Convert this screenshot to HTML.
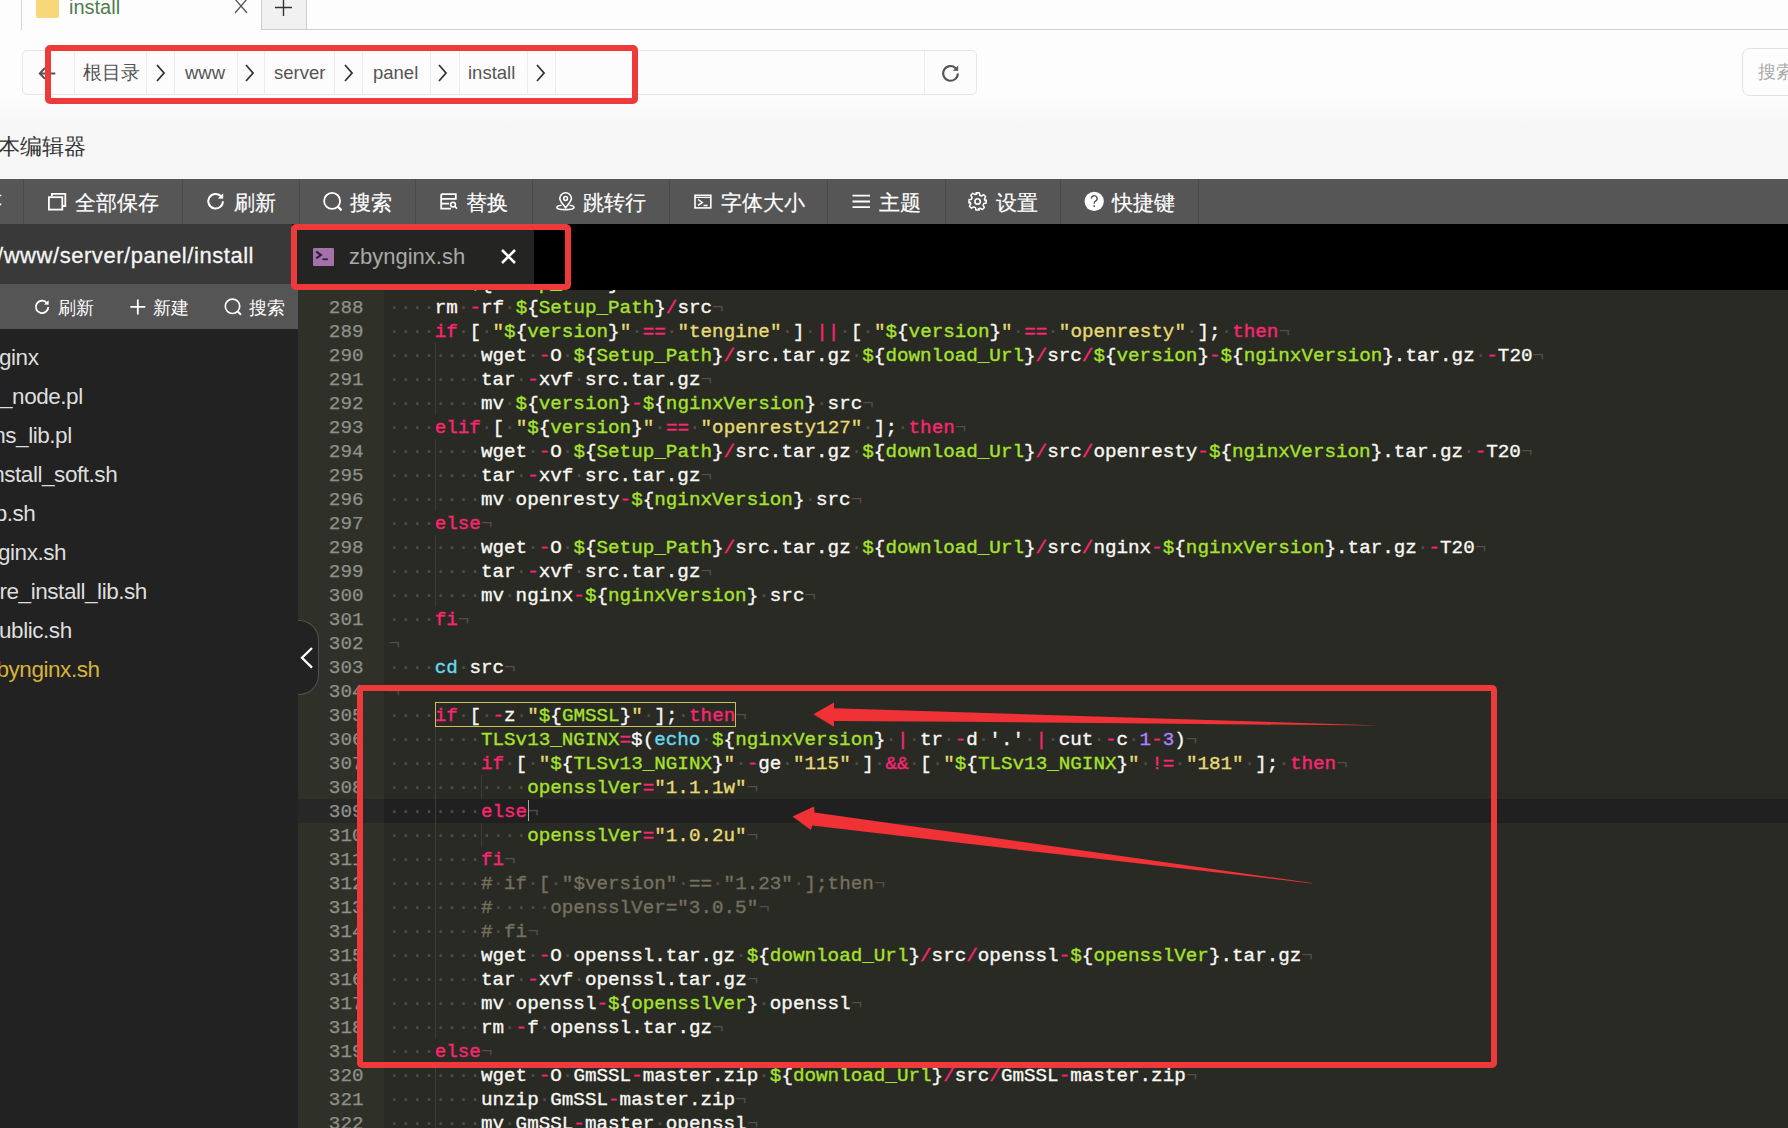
<!DOCTYPE html>
<html><head><meta charset="utf-8">
<style>
*{margin:0;padding:0;box-sizing:border-box}
html,body{width:1788px;height:1128px;overflow:hidden}
body{position:relative;background:#fdfdfd;font-family:"Liberation Sans",sans-serif;}
.a{position:absolute;white-space:nowrap}
/* top light area */
#top{left:0;top:0;width:1788px;height:179px;background:linear-gradient(#fdfdfd 0,#fdfdfd 95px,#f7f7f7 125px,#f6f6f6 179px)}
#tabline{left:306px;top:29px;width:1482px;height:1px;background:#cfcfcf}
#tabl{left:21px;top:0;width:1px;height:30px;background:#d6d6d6}
#plus{left:261px;top:0;width:46px;height:30px;background:#f1f1f1;border:1px solid #cdcdcd;border-top:0}
#folder{left:36px;top:-2px;width:23px;height:20px;background:#f6d77a;border-radius:2px}
#tabtxt{left:69px;top:-8px;font-size:20px;color:#4d7d4d;line-height:30px}
#bc{left:22px;top:50px;width:955px;height:45px;border:1px solid #e6e6e6;border-radius:5px;background:#fcfcfc}
.bsep{top:51px;width:1px;height:43px;background:#ececec}
.btxt{top:50px;height:45px;line-height:45px;font-size:18.5px;color:#555}
.chev{top:63px}
#srch{left:1742px;top:48px;width:60px;height:47.5px;border:1px solid #e3e3e3;border-radius:8px;background:#fdfdfd}
#srchtxt{left:1758px;top:50px;line-height:45px;font-size:18px;color:#aaa;white-space:nowrap}
#title{left:-2px;top:132px;font-size:22px;color:#333;line-height:30px}
/* toolbar */
#tb{left:0;top:179px;width:1788px;height:45px;background:#565656}
.tsep{top:179px;width:1px;height:45px;background:#4a4a4a}
.ttxt{top:180px;line-height:45px;font-size:21px;color:#fff;-webkit-text-stroke:0.2px #fff}
/* dark strip */
#strip{left:0;top:224px;width:1788px;height:66px;background:#000}
#pathbar{left:0;top:224px;width:292px;height:60px;background:#393939}
#pathtxt{left:-3px;top:226px;line-height:60px;font-size:22px;color:#f5f5f5;letter-spacing:0.55px;-webkit-text-stroke:0.3px #f5f5f5}
#tab{left:297px;top:230px;width:237px;height:54px;background:#242522}
#tabname{left:349px;top:230px;line-height:54px;font-size:22px;color:#a9a9a9}
/* sidebar */
#sbt{left:0;top:284px;width:298px;height:45px;background:#555}
.stxt{top:285.5px;line-height:45px;font-size:18px;color:#fff}
#sbl{left:0;top:329px;width:298px;height:799px;background:#222}
.file{left:0;font-size:22.5px;color:#dedede;line-height:39px;letter-spacing:-0.45px}
/* editor */
#ed{left:298px;top:290px;width:1490px;height:838px;background:#2a2a25;overflow:hidden}
#gut{left:0;top:0;width:86px;height:838px;background:#2f3129}
.gn{position:absolute;left:0;width:65.5px;-webkit-text-stroke:0.25px currentColor;text-align:right;height:24px;line-height:24px;color:#8f908a}
#code{left:86px;top:0;width:1404px;height:838px}
.row{position:absolute;left:4.5px;height:24px;line-height:24px;white-space:pre;color:#f8f8f2}
.mono{font-family:"Liberation Mono",monospace;font-size:19.25px}
.row b{font-weight:normal}
.row{-webkit-text-stroke:0.35px currentColor}
.row i{font-style:normal;color:#505049;-webkit-text-stroke:0}
.k{color:#f92672}.s{color:#e6db74}.v{color:#a6e22e}.t{color:#f8f8f2}.b{color:#66d9ef}.n{color:#ae81ff}.c{color:#75715e}
.ig{position:absolute;width:1px;background:#3d3d36}
#act{left:0;top:508.5px;width:1490px;height:24px;background:#202020}
#gact{left:0;top:508.5px;width:86px;height:24px;background:#272727}
/* annotations */
.rbox{border:6.5px solid #ee3a3b;border-radius:5px}
</style></head><body>
<div class="a" id="top"></div>
<div class="a" id="tabl"></div>
<div class="a" id="folder"></div>
<div class="a" id="tabtxt">install</div>
<svg class="a" style="left:234px;top:0" width="14" height="14"><path d="M1 -1 L13 13 M13 -1 L1 13" stroke="#555" stroke-width="1.3" fill="none"/></svg>
<div class="a" id="plus"></div>
<svg class="a" style="left:274px;top:0" width="19" height="17"><path d="M1 7.5 H18 M9.5 0 V16" stroke="#333" stroke-width="1.4" fill="none"/></svg>
<div class="a" id="tabline"></div>

<div class="a" id="bc"></div>
<svg class="a" style="left:30px;top:60px" width="30" height="26"><path d="M10 13.4 H25.3 M15 8 L9.8 13.4 L15 18.9" stroke="#555" stroke-width="2" fill="none"/></svg>
<div class="a bsep" style="left:74px"></div>
<div class="a btxt" style="left:83px">根目录</div>
<div class="a bsep" style="left:146px"></div>
<svg class="a chev" style="left:154px" width="14" height="20"><path d="M3 2 L10 10 L3 18" stroke="#333" stroke-width="1.8" fill="none"/></svg>
<div class="a bsep" style="left:174px"></div>
<div class="a btxt" style="left:185px">www</div>
<div class="a bsep" style="left:237px"></div>
<svg class="a chev" style="left:243px" width="14" height="20"><path d="M3 2 L10 10 L3 18" stroke="#333" stroke-width="1.8" fill="none"/></svg>
<div class="a bsep" style="left:264px"></div>
<div class="a btxt" style="left:274px">server</div>
<div class="a bsep" style="left:334px"></div>
<svg class="a chev" style="left:342px" width="14" height="20"><path d="M3 2 L10 10 L3 18" stroke="#333" stroke-width="1.8" fill="none"/></svg>
<div class="a bsep" style="left:362px"></div>
<div class="a btxt" style="left:373px">panel</div>
<div class="a bsep" style="left:430px"></div>
<svg class="a chev" style="left:436px" width="14" height="20"><path d="M3 2 L10 10 L3 18" stroke="#333" stroke-width="1.8" fill="none"/></svg>
<div class="a bsep" style="left:459px"></div>
<div class="a btxt" style="left:468px">install</div>
<div class="a bsep" style="left:527px"></div>
<svg class="a chev" style="left:534px" width="14" height="20"><path d="M3 2 L10 10 L3 18" stroke="#333" stroke-width="1.8" fill="none"/></svg>
<div class="a bsep" style="left:555px"></div>
<div class="a bsep" style="left:924px"></div>
<svg class="a" style="left:0;top:0" width="1000" height="100"><path d="M957.85 73.40 A7.35 7.35 0 1 1 955.70 68.20" stroke="#555" stroke-width="2.10" fill="none"/><path d="M958.19 65.40 L958.19 70.87 L952.83 70.67 Z" fill="#555" stroke="none"/></svg>
<div class="a rbox" style="left:45px;top:45px;width:593px;height:59px"></div>
<div class="a" id="srch"></div>
<div class="a" id="srchtxt">搜索</div>
<div class="a" id="title">本编辑器</div>

<div class="a" id="tb"></div>
<div class="a tsep" style="left:23px"></div>
<div class="a tsep" style="left:182px"></div>
<div class="a tsep" style="left:299px"></div>
<div class="a tsep" style="left:415px"></div>
<div class="a tsep" style="left:532px"></div>
<div class="a tsep" style="left:669px"></div>
<div class="a tsep" style="left:827px"></div>
<div class="a tsep" style="left:945px"></div>
<div class="a tsep" style="left:1060px"></div>
<div class="a tsep" style="left:1198px"></div>
<div class="a ttxt" style="left:75px">全部保存</div>
<div class="a ttxt" style="left:234px">刷新</div>
<div class="a ttxt" style="left:350px">搜索</div>
<div class="a ttxt" style="left:466px">替换</div>
<div class="a ttxt" style="left:583px">跳转行</div>
<div class="a ttxt" style="left:721px">字体大小</div>
<div class="a ttxt" style="left:879px">主题</div>
<div class="a ttxt" style="left:996px">设置</div>
<div class="a ttxt" style="left:1112px">快捷键</div>


<svg class="a" style="left:0;top:179px" width="1200" height="45" viewBox="0 179 1200 45" fill="none" stroke="#fff" stroke-width="1.8">
<path d="M0 195.5 H1.3 M0 204.4 H1.3" stroke-width="1.6"/>
<!-- save all -->
<rect x="48.9" y="197.2" width="13.4" height="12.4"/>
<path d="M51.9 196.2 V193.9 H65.3 V206 H63"/>
<!-- refresh -->
<path d="M222.90 201.20 A7.30 7.30 0 1 1 220.76 196.04" stroke="#fff" stroke-width="2.00" fill="none"/><path d="M223.20 193.30 L223.20 198.70 L217.90 198.50 Z" fill="#fff" stroke="none"/>
<!-- search -->
<circle cx="332.1" cy="200.9" r="8"/>
<path d="M337.8 206.6 L341.6 210.4" stroke-width="2.2"/>
<!-- replace -->
<path d="M441.2 194.2 V208.6 H451 M441.2 194.2 H455.8 V198.9 H441.2 M441.2 203.7 H449"/>
<circle cx="453" cy="204.6" r="2.4" stroke-width="1.6"/>
<path d="M454.8 206.4 L457 208.6" stroke-width="1.6"/>
<!-- pin -->
<g transform="translate(0 0.8)">
<path d="M565.6 207 C561 201.5 559.8 199.5 559.8 197.8 A5.8 5.8 0 0 1 571.4 197.8 C571.4 199.5 570.2 201.5 565.6 207 Z" stroke-width="1.6"/>
<circle cx="565.6" cy="197.7" r="1.9" stroke-width="1.5"/>
</g>
<path d="M561.5 205.3 C557.5 205.8 556.8 206.6 556.8 207.4 C556.8 208.7 560.8 209.6 565.4 209.6 C570 209.6 574 208.7 574 207.4 C574 206.6 573.2 205.8 569.5 205.3" stroke-width="1.6"/>
<!-- terminal window -->
<rect x="695" y="195.3" width="15.8" height="12.6" stroke-width="1.6"/>
<path d="M695 197.4 H710.8" stroke-width="1.2"/>
<path d="M698 199.5 L702.4 202.5 L698 205.4 M703.5 205.4 H707.6" stroke-width="1.5"/>
<!-- menu -->
<path d="M852.5 195.6 H870 M852.5 201.5 H870 M852.5 207.2 H870" stroke-width="1.8"/>
<!-- gear -->
<g transform="translate(977.6 201.4)">
<path d="M-1.6 -8.6 L1.6 -8.6 L2.2 -6.1 L3.9 -5.4 L6.1 -6.7 L8.1 -4.7 L6.8 -2.5 L7.4 -0.8 L8.6 -1.4 L8.6 1.6 L6.2 2.2 L5.5 3.9 L6.8 6.1 L4.8 8.1 L2.5 6.8 L0.9 7.4 L1.6 8.6 L-1.6 8.6 L-2.2 6.2 L-3.9 5.5 L-6.1 6.8 L-8.1 4.8 L-6.8 2.5 L-7.4 0.9 L-8.6 1.6 L-8.6 -1.6 L-6.2 -2.2 L-5.5 -3.9 L-6.8 -6.1 L-4.8 -8.1 L-2.5 -6.8 L-0.9 -7.4 Z" stroke-width="1.5" stroke-linejoin="round"/>
<circle cx="0" cy="0" r="2.7" stroke-width="1.6"/>
</g>
<!-- help -->
<circle cx="1094.2" cy="201.4" r="9.6" fill="#fff" stroke="none"/>
<path d="M1091.3 198.6 A2.9 2.9 0 1 1 1095.4 201.2 C1094.4 201.8 1094.2 202.4 1094.2 203.8" stroke="#555" stroke-width="1.4"/>
<circle cx="1094.2" cy="206" r="0.9" fill="#555" stroke="none"/>
</svg>


<div class="a" id="strip"></div>
<div class="a" id="pathbar"></div>
<div class="a" id="pathtxt">/www/server/panel/install</div>
<div class="a" id="tab"></div>
<div class="a" style="left:313px;top:248px;width:21px;height:18px;background:#a571aa;border-radius:1px"></div>
<div class="a" id="tabname">zbynginx.sh</div>
<svg class="a" style="left:313px;top:248px" width="21" height="18" fill="none"><path d="M3.2 3.6 L8 7 L3.2 10.4" stroke="#2a1d3a" stroke-width="2"/><path d="M9.5 11.3 H14.8" stroke="#2a1d3a" stroke-width="1.8"/></svg>
<svg class="a" style="left:500px;top:248px" width="17" height="17" fill="none"><path d="M2 2 L15 15 M15 2 L2 15" stroke="#fff" stroke-width="2.6"/></svg>

<div class="a" id="sbt"></div>
<svg class="a" style="left:0;top:284px" width="298" height="45" viewBox="0 284 298 45" fill="none" stroke="#fff" stroke-width="1.7">
<path d="M48.30 306.90 A6.20 6.20 0 1 1 46.48 302.52" stroke="#fff" stroke-width="1.80" fill="none"/><path d="M48.60 300.14 L48.60 304.76 L44.07 304.59 Z" fill="#fff" stroke="none"/>
<path d="M130.3 306.9 H145.3 M137.8 299.4 V314.5" stroke-width="1.8"/>
<circle cx="232.5" cy="306.3" r="7.2"/>
<path d="M237.7 311.5 L241 314.8" stroke-width="2"/>
</svg>
<div class="a stxt" style="left:58px">刷新</div>
<div class="a stxt" style="left:153px">新建</div>
<div class="a stxt" style="left:249px">搜索</div>
<div class="a" id="sbl"></div>
<div class="a file" style="top:338px;left:-1px">ginx</div>
<div class="a file" style="top:377px;left:0px">_node.pl</div>
<div class="a file" style="top:416px;left:-6.8px">ns_lib.pl</div>
<div class="a file" style="top:455px;left:-7.8px">nstall_soft.sh</div>
<div class="a file" style="top:494px;left:-5.3px">p.sh</div>
<div class="a file" style="top:533px;left:-2px">ginx.sh</div>
<div class="a file" style="top:572px;left:-0.5px">re_install_lib.sh</div>
<div class="a file" style="top:611px;left:-1px">ublic.sh</div>
<div class="a file" style="top:650px;left:-3.5px;color:#d7b23a">bynginx.sh</div>

<div class="a mono" id="ed">
<div class="a" id="act"></div>
<div class="a" id="gut">
<div class="a" id="gact"></div>
<div class="gn" style="top:-18.5px">287</div>
<div class="gn" style="top:5.5px">288</div>
<div class="gn" style="top:29.5px">289</div>
<div class="gn" style="top:53.5px">290</div>
<div class="gn" style="top:77.5px">291</div>
<div class="gn" style="top:101.5px">292</div>
<div class="gn" style="top:125.5px">293</div>
<div class="gn" style="top:149.5px">294</div>
<div class="gn" style="top:173.5px">295</div>
<div class="gn" style="top:197.5px">296</div>
<div class="gn" style="top:221.5px">297</div>
<div class="gn" style="top:245.5px">298</div>
<div class="gn" style="top:269.5px">299</div>
<div class="gn" style="top:293.5px">300</div>
<div class="gn" style="top:317.5px">301</div>
<div class="gn" style="top:341.5px">302</div>
<div class="gn" style="top:365.5px">303</div>
<div class="gn" style="top:389.5px">304</div>
<div class="gn" style="top:413.5px">305</div>
<div class="gn" style="top:437.5px">306</div>
<div class="gn" style="top:461.5px">307</div>
<div class="gn" style="top:485.5px">308</div>
<div class="gn" style="top:509.5px">309</div>
<div class="gn" style="top:533.5px">310</div>
<div class="gn" style="top:557.5px">311</div>
<div class="gn" style="top:581.5px">312</div>
<div class="gn" style="top:605.5px">313</div>
<div class="gn" style="top:629.5px">314</div>
<div class="gn" style="top:653.5px">315</div>
<div class="gn" style="top:677.5px">316</div>
<div class="gn" style="top:701.5px">317</div>
<div class="gn" style="top:725.5px">318</div>
<div class="gn" style="top:749.5px">319</div>
<div class="gn" style="top:773.5px">320</div>
<div class="gn" style="top:797.5px">321</div>
<div class="gn" style="top:821.5px">322</div>
</div>
<div class="a" id="code">
<div class="ig" style="left:50.7px;top:52.5px;height:72px"></div>
<div class="ig" style="left:50.7px;top:148.5px;height:72px"></div>
<div class="ig" style="left:50.7px;top:244.5px;height:72px"></div>
<div class="ig" style="left:50.7px;top:436.5px;height:312px"></div>
<div class="ig" style="left:50.7px;top:772.5px;height:72px"></div>
<div class="ig" style="left:96.9px;top:484.5px;height:24px"></div>
<div class="ig" style="left:96.9px;top:532.5px;height:24px"></div>
<div class="row" style="top:-18.5px"><i>····</i><b class="b">cd</b><i>·</i><b class="v">$</b><b class="t">{</b><b class="v">Setup_Path</b><b class="t">}</b><i>¬</i></div>
<div class="row" style="top:5.5px"><i>····</i><b class="t">rm</b><i>·</i><b class="k">-</b><b class="t">rf</b><i>·</i><b class="v">$</b><b class="t">{</b><b class="v">Setup_Path</b><b class="t">}</b><b class="k">/</b><b class="t">src</b><i>¬</i></div>
<div class="row" style="top:29.5px"><i>····</i><b class="k">if</b><i>·</i><b class="t">[</b><i>·</i><b class="s">"</b><b class="v">$</b><b class="t">{</b><b class="v">version</b><b class="t">}</b><b class="s">"</b><i>·</i><b class="k">==</b><i>·</i><b class="s">"</b><b class="s">tengine</b><b class="s">"</b><i>·</i><b class="t">]</b><i>·</i><b class="k">||</b><i>·</i><b class="t">[</b><i>·</i><b class="s">"</b><b class="v">$</b><b class="t">{</b><b class="v">version</b><b class="t">}</b><b class="s">"</b><i>·</i><b class="k">==</b><i>·</i><b class="s">"</b><b class="s">openresty</b><b class="s">"</b><i>·</i><b class="t">]</b><b class="t">;</b><i>·</i><b class="k">then</b><i>¬</i></div>
<div class="row" style="top:53.5px"><i>········</i><b class="t">wget</b><i>·</i><b class="k">-</b><b class="t">O</b><i>·</i><b class="v">$</b><b class="t">{</b><b class="v">Setup_Path</b><b class="t">}</b><b class="k">/</b><b class="t">src</b><b class="t">.</b><b class="t">tar</b><b class="t">.</b><b class="t">gz</b><i>·</i><b class="v">$</b><b class="t">{</b><b class="v">download_Url</b><b class="t">}</b><b class="k">/</b><b class="t">src</b><b class="k">/</b><b class="v">$</b><b class="t">{</b><b class="v">version</b><b class="t">}</b><b class="k">-</b><b class="v">$</b><b class="t">{</b><b class="v">nginxVersion</b><b class="t">}</b><b class="t">.</b><b class="t">tar</b><b class="t">.</b><b class="t">gz</b><i>·</i><b class="k">-</b><b class="t">T20</b><i>¬</i></div>
<div class="row" style="top:77.5px"><i>········</i><b class="t">tar</b><i>·</i><b class="k">-</b><b class="t">xvf</b><i>·</i><b class="t">src</b><b class="t">.</b><b class="t">tar</b><b class="t">.</b><b class="t">gz</b><i>¬</i></div>
<div class="row" style="top:101.5px"><i>········</i><b class="t">mv</b><i>·</i><b class="v">$</b><b class="t">{</b><b class="v">version</b><b class="t">}</b><b class="k">-</b><b class="v">$</b><b class="t">{</b><b class="v">nginxVersion</b><b class="t">}</b><i>·</i><b class="t">src</b><i>¬</i></div>
<div class="row" style="top:125.5px"><i>····</i><b class="k">elif</b><i>·</i><b class="t">[</b><i>·</i><b class="s">"</b><b class="v">$</b><b class="t">{</b><b class="v">version</b><b class="t">}</b><b class="s">"</b><i>·</i><b class="k">==</b><i>·</i><b class="s">"</b><b class="s">openresty127</b><b class="s">"</b><i>·</i><b class="t">]</b><b class="t">;</b><i>·</i><b class="k">then</b><i>¬</i></div>
<div class="row" style="top:149.5px"><i>········</i><b class="t">wget</b><i>·</i><b class="k">-</b><b class="t">O</b><i>·</i><b class="v">$</b><b class="t">{</b><b class="v">Setup_Path</b><b class="t">}</b><b class="k">/</b><b class="t">src</b><b class="t">.</b><b class="t">tar</b><b class="t">.</b><b class="t">gz</b><i>·</i><b class="v">$</b><b class="t">{</b><b class="v">download_Url</b><b class="t">}</b><b class="k">/</b><b class="t">src</b><b class="k">/</b><b class="t">openresty</b><b class="k">-</b><b class="v">$</b><b class="t">{</b><b class="v">nginxVersion</b><b class="t">}</b><b class="t">.</b><b class="t">tar</b><b class="t">.</b><b class="t">gz</b><i>·</i><b class="k">-</b><b class="t">T20</b><i>¬</i></div>
<div class="row" style="top:173.5px"><i>········</i><b class="t">tar</b><i>·</i><b class="k">-</b><b class="t">xvf</b><i>·</i><b class="t">src</b><b class="t">.</b><b class="t">tar</b><b class="t">.</b><b class="t">gz</b><i>¬</i></div>
<div class="row" style="top:197.5px"><i>········</i><b class="t">mv</b><i>·</i><b class="t">openresty</b><b class="k">-</b><b class="v">$</b><b class="t">{</b><b class="v">nginxVersion</b><b class="t">}</b><i>·</i><b class="t">src</b><i>¬</i></div>
<div class="row" style="top:221.5px"><i>····</i><b class="k">else</b><i>¬</i></div>
<div class="row" style="top:245.5px"><i>········</i><b class="t">wget</b><i>·</i><b class="k">-</b><b class="t">O</b><i>·</i><b class="v">$</b><b class="t">{</b><b class="v">Setup_Path</b><b class="t">}</b><b class="k">/</b><b class="t">src</b><b class="t">.</b><b class="t">tar</b><b class="t">.</b><b class="t">gz</b><i>·</i><b class="v">$</b><b class="t">{</b><b class="v">download_Url</b><b class="t">}</b><b class="k">/</b><b class="t">src</b><b class="k">/</b><b class="t">nginx</b><b class="k">-</b><b class="v">$</b><b class="t">{</b><b class="v">nginxVersion</b><b class="t">}</b><b class="t">.</b><b class="t">tar</b><b class="t">.</b><b class="t">gz</b><i>·</i><b class="k">-</b><b class="t">T20</b><i>¬</i></div>
<div class="row" style="top:269.5px"><i>········</i><b class="t">tar</b><i>·</i><b class="k">-</b><b class="t">xvf</b><i>·</i><b class="t">src</b><b class="t">.</b><b class="t">tar</b><b class="t">.</b><b class="t">gz</b><i>¬</i></div>
<div class="row" style="top:293.5px"><i>········</i><b class="t">mv</b><i>·</i><b class="t">nginx</b><b class="k">-</b><b class="v">$</b><b class="t">{</b><b class="v">nginxVersion</b><b class="t">}</b><i>·</i><b class="t">src</b><i>¬</i></div>
<div class="row" style="top:317.5px"><i>····</i><b class="k">fi</b><i>¬</i></div>
<div class="row" style="top:341.5px"><i>¬</i></div>
<div class="row" style="top:365.5px"><i>····</i><b class="b">cd</b><i>·</i><b class="t">src</b><i>¬</i></div>
<div class="row" style="top:389.5px"><i>¬</i></div>
<div class="row" style="top:413.5px"><i>····</i><b class="k">if</b><i>·</i><b class="t">[</b><i>·</i><b class="k">-</b><b class="t">z</b><i>·</i><b class="s">"</b><b class="v">$</b><b class="t">{</b><b class="v">GMSSL</b><b class="t">}</b><b class="s">"</b><i>·</i><b class="t">]</b><b class="t">;</b><i>·</i><b class="k">then</b><i>¬</i></div>
<div class="row" style="top:437.5px"><i>········</i><b class="v">TLSv13_NGINX</b><b class="k">=</b><b class="t">$(</b><b class="b">echo</b><i>·</i><b class="v">$</b><b class="t">{</b><b class="v">nginxVersion</b><b class="t">}</b><i>·</i><b class="k">|</b><i>·</i><b class="t">tr</b><i>·</i><b class="k">-</b><b class="t">d</b><i>·</i><b class="t">'.'</b><i>·</i><b class="k">|</b><i>·</i><b class="t">cut</b><i>·</i><b class="k">-</b><b class="t">c</b><i>·</i><b class="n">1</b><b class="k">-</b><b class="n">3</b><b class="t">)</b><i>¬</i></div>
<div class="row" style="top:461.5px"><i>········</i><b class="k">if</b><i>·</i><b class="t">[</b><i>·</i><b class="s">"</b><b class="v">$</b><b class="t">{</b><b class="v">TLSv13_NGINX</b><b class="t">}</b><b class="s">"</b><i>·</i><b class="k">-</b><b class="t">ge</b><i>·</i><b class="s">"</b><b class="s">115</b><b class="s">"</b><i>·</i><b class="t">]</b><i>·</i><b class="k">&amp;&amp;</b><i>·</i><b class="t">[</b><i>·</i><b class="s">"</b><b class="v">$</b><b class="t">{</b><b class="v">TLSv13_NGINX</b><b class="t">}</b><b class="s">"</b><i>·</i><b class="k">!=</b><i>·</i><b class="s">"</b><b class="s">181</b><b class="s">"</b><i>·</i><b class="t">]</b><b class="t">;</b><i>·</i><b class="k">then</b><i>¬</i></div>
<div class="row" style="top:485.5px"><i>············</i><b class="v">opensslVer</b><b class="k">=</b><b class="s">"</b><b class="s">1.1.1w</b><b class="s">"</b><i>¬</i></div>
<div class="row" style="top:509.5px"><i>········</i><b class="k">else</b><i>¬</i></div>
<div class="row" style="top:533.5px"><i>············</i><b class="v">opensslVer</b><b class="k">=</b><b class="s">"</b><b class="s">1.0.2u</b><b class="s">"</b><i>¬</i></div>
<div class="row" style="top:557.5px"><i>········</i><b class="k">fi</b><i>¬</i></div>
<div class="row" style="top:581.5px"><i>········</i><b class="c">#</b><i>·</i><b class="c">if</b><i>·</i><b class="c">[</b><i>·</i><b class="c">"$version"</b><i>·</i><b class="c">==</b><i>·</i><b class="c">"1.23"</b><i>·</i><b class="c">];then</b><i>¬</i></div>
<div class="row" style="top:605.5px"><i>········</i><b class="c">#</b><i>·····</i><b class="c">opensslVer="3.0.5"</b><i>¬</i></div>
<div class="row" style="top:629.5px"><i>········</i><b class="c">#</b><i>·</i><b class="c">fi</b><i>¬</i></div>
<div class="row" style="top:653.5px"><i>········</i><b class="t">wget</b><i>·</i><b class="k">-</b><b class="t">O</b><i>·</i><b class="t">openssl</b><b class="t">.</b><b class="t">tar</b><b class="t">.</b><b class="t">gz</b><i>·</i><b class="v">$</b><b class="t">{</b><b class="v">download_Url</b><b class="t">}</b><b class="k">/</b><b class="t">src</b><b class="k">/</b><b class="t">openssl</b><b class="k">-</b><b class="v">$</b><b class="t">{</b><b class="v">opensslVer</b><b class="t">}</b><b class="t">.</b><b class="t">tar</b><b class="t">.</b><b class="t">gz</b><i>¬</i></div>
<div class="row" style="top:677.5px"><i>········</i><b class="t">tar</b><i>·</i><b class="k">-</b><b class="t">xvf</b><i>·</i><b class="t">openssl</b><b class="t">.</b><b class="t">tar</b><b class="t">.</b><b class="t">gz</b><i>¬</i></div>
<div class="row" style="top:701.5px"><i>········</i><b class="t">mv</b><i>·</i><b class="t">openssl</b><b class="k">-</b><b class="v">$</b><b class="t">{</b><b class="v">opensslVer</b><b class="t">}</b><i>·</i><b class="t">openssl</b><i>¬</i></div>
<div class="row" style="top:725.5px"><i>········</i><b class="t">rm</b><i>·</i><b class="k">-</b><b class="t">f</b><i>·</i><b class="t">openssl</b><b class="t">.</b><b class="t">tar</b><b class="t">.</b><b class="t">gz</b><i>¬</i></div>
<div class="row" style="top:749.5px"><i>····</i><b class="k">else</b><i>¬</i></div>
<div class="row" style="top:773.5px"><i>········</i><b class="t">wget</b><i>·</i><b class="k">-</b><b class="t">O</b><i>·</i><b class="t">GmSSL</b><b class="k">-</b><b class="t">master</b><b class="t">.</b><b class="t">zip</b><i>·</i><b class="v">$</b><b class="t">{</b><b class="v">download_Url</b><b class="t">}</b><b class="k">/</b><b class="t">src</b><b class="k">/</b><b class="t">GmSSL</b><b class="k">-</b><b class="t">master</b><b class="t">.</b><b class="t">zip</b><i>¬</i></div>
<div class="row" style="top:797.5px"><i>········</i><b class="t">unzip</b><i>·</i><b class="t">GmSSL</b><b class="k">-</b><b class="t">master</b><b class="t">.</b><b class="t">zip</b><i>¬</i></div>
<div class="row" style="top:821.5px"><i>········</i><b class="t">mv</b><i>·</i><b class="t">GmSSL</b><b class="k">-</b><b class="t">master</b><i>·</i><b class="t">openssl</b><i>¬</i></div>
</div>
</div>


<div class="a" style="left:298px;top:620px;width:20.5px;height:75px;background:#222;border:1px solid #505050;border-left:0;border-radius:0 20px 20px 0"></div>
<svg class="a" style="left:298px;top:645px" width="18" height="26" fill="none"><path d="M14 3 L4 12.8 L14 22.6" stroke="#fff" stroke-width="2.3"/></svg>
<div class="a" style="left:434.8px;top:702px;width:301px;height:24.5px;border:1.5px solid #c9c05a"></div>
<div class="a" style="left:527.5px;top:800px;width:1.6px;height:21px;background:#a8a8a2"></div>
<svg class="a" style="left:0;top:0" width="1788" height="1128" viewBox="0 0 1788 1128">
<path d="M813.4 714.2 L834 702.5 L834 708.3 L1380 725.4 L1380 725.6 L1200 724 L960 721.8 L834 720.9 L834 726.7 Z" fill="#f03236"/>
<path d="M792.5 816.5 L814 806.6 L814.5 812.5 L1311.6 883 L1311.6 883.4 L1100 859.1 L940 840.6 L812.2 825.4 L810.9 829.9 Z" fill="#f03236"/>
</svg>
<div class="a rbox" style="left:291px;top:224px;width:280px;height:66px"></div>
<div class="a rbox" style="left:357px;top:685px;width:1140px;height:383px"></div>
</body></html>
